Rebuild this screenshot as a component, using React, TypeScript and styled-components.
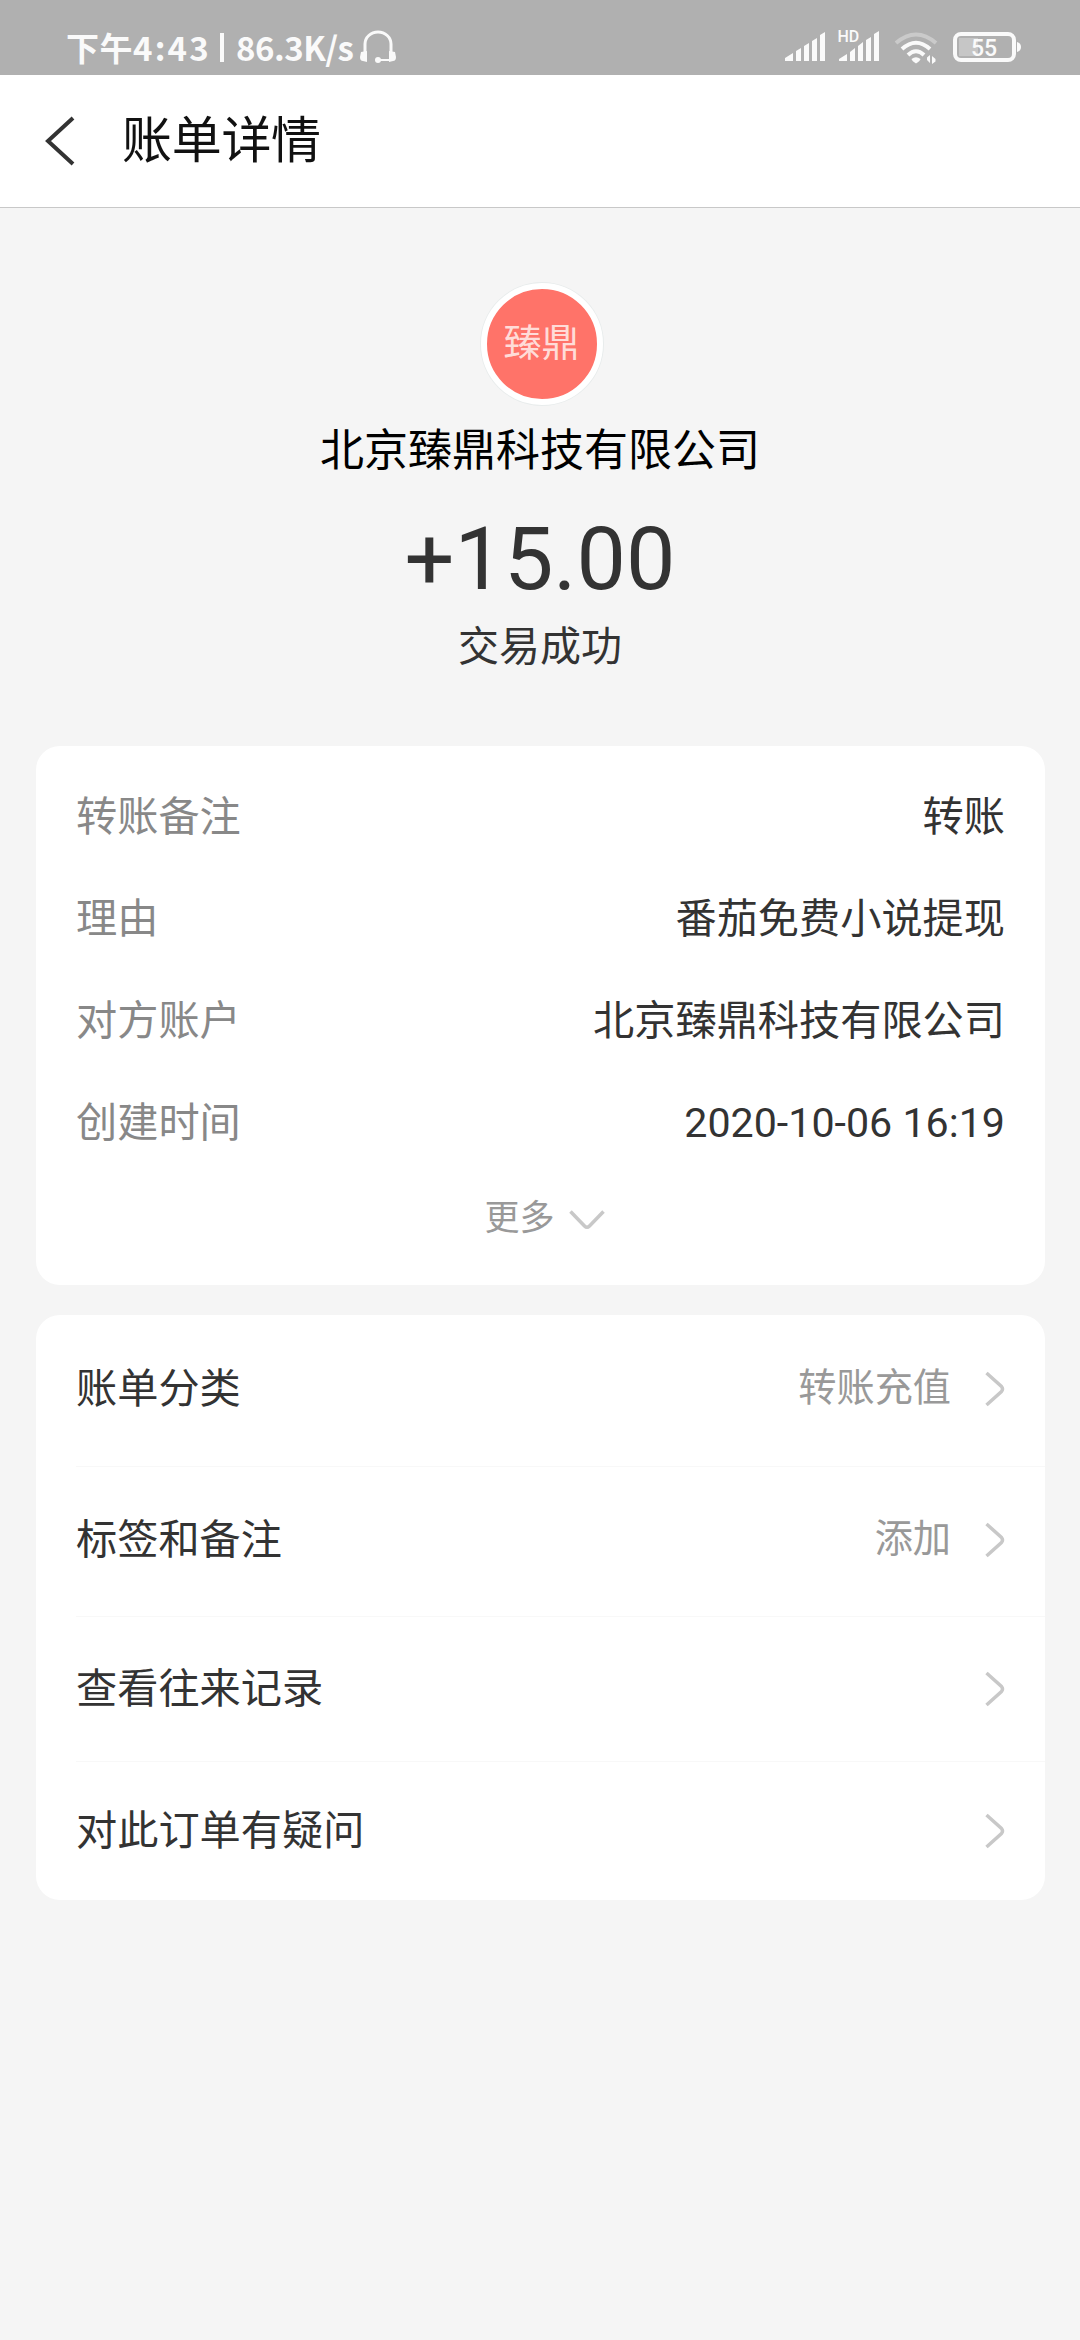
import React from "react";
import styled, { createGlobalStyle } from "styled-components";

const Global = createGlobalStyle`
  * { box-sizing: border-box; }
  body {
    margin: 0;
    background: #f5f5f5;
    font-family: Roboto, "Noto Sans CJK SC", sans-serif;
    color: #333;
  }
`;

const Screen = styled.div`
  width: 1080px;
  height: 2340px;
  background: #f5f5f5;
  display: flex;
  flex-direction: column;
  overflow: hidden;
`;

const StatusBar = styled.div`
  height: 75px;
  flex: none;
  background: #b0b0b0;
  padding: 20px 59px 0 66px;
  display: flex;
  justify-content: space-between;
`;

const StatusLeft = styled.div`
  display: flex;
  height: 54px;
  align-items: center;
  color: #fafafa;
  font-family: "Noto Sans CJK SC", sans-serif;
  font-size: 33px;
  line-height: 52px;
  padding-bottom: 1px;
  white-space: pre;
`;

const StatusText = styled.span<{ $width: number; $spacing?: number }>`
  width: ${(p) => p.$width}px;
  letter-spacing: ${(p) => p.$spacing ?? 0}px;
  font-weight: 700;
`;

const StatusDivider = styled.span`
  width: 4px;
  height: 29px;
  margin: 2px 12px 0 0;
  background: #fafafa;
`;

const StatusRight = styled.div`
  display: flex;
`;

const Header = styled.header`
  height: 133px;
  flex: none;
  background: #fff;
  border-bottom: 1px solid #c8c8c8;
  display: flex;
  align-items: center;
  padding-left: 44px;
`;

const Title = styled.h1`
  margin: 0 0 0 46px;
  font-size: 50px;
  font-weight: 400;
  line-height: 70px;
  letter-spacing: -0.3px;
  color: #111;
`;

const Summary = styled.section`
  height: 538px;
  flex: none;
  display: flex;
  flex-direction: column;
  align-items: center;
  padding-top: 75px;
`;

const Avatar = styled.div`
  width: 122px;
  height: 122px;
  margin-left: 3px;
  border-radius: 50%;
  border: 6px solid #fff;
  background: #ff7369;
  box-shadow: 0 0 0 1px #e8ecec;
  display: flex;
  align-items: center;
  justify-content: center;
  font-size: 38px;
  font-weight: 400;
  line-height: 50px;
  padding-bottom: 3px;
  color: #ffdcd8;
`;

const Payee = styled.div`
  margin-top: 14px;
  font-size: 44px;
  line-height: 64px;
  color: #000;
`;

const Amount = styled.div`
  margin-top: 24px;
  font-size: 88px;
  line-height: 104px;
  color: #333;
`;

const State = styled.div`
  margin-top: 6px;
  font-size: 41px;
  line-height: 60px;
`;

const Card = styled.section<{ $height: number }>`
  flex: none;
  height: ${(p) => p.$height}px;
  margin: 0 35px 30px 36px;
  border-radius: 24px;
  background: #fff;
  overflow: hidden;
`;

const DetailRow = styled.div`
  display: flex;
  justify-content: space-between;
  align-items: center;
  height: 102px;
  padding: 0 40px;
  font-size: 41.2px;
  line-height: 60px;
`;

const Details = styled.div`
  padding-top: 20px;
`;

const Label = styled.span`
  color: #888;
`;

const Value = styled.span`
  color: #333;
`;

const More = styled.button`
  width: 100%;
  height: 80px;
  border: 0;
  background: none;
  display: flex;
  align-items: center;
  justify-content: center;
  gap: 14px;
  padding: 0 0 0 8px;
  font: inherit;
  font-size: 35px;
  color: #999;

  svg {
    margin-top: 12px;
  }
`;

const LinkRow = styled.div<{ $height: number; $lift?: number }>`
  height: ${(p) => p.$height}px;
  margin-left: 40px;
  padding: 0 40px ${(p) => p.$lift ?? 0}px 0;
  display: flex;
  align-items: center;
  font-size: 41.2px;
  line-height: 60px;
  & + & {
    border-top: 1px solid #f8f8f8;
  }
`;

const LinkValue = styled.span`
  margin-left: auto;
  margin-right: 34px;
  padding-bottom: 1px;
  font-size: 38.2px;
  color: #999;
`;

const Push = styled.span`
  margin-left: auto;
`;

const Chevron = () => (
  <svg width="20" height="36" viewBox="0 0 20 36" fill="none" stroke="#c8c8c8" strokeWidth="3.5">
    <path d="M1.5 2 L16.5 15.5 Q18.5 18 16.5 20.5 L1.5 34" />
  </svg>
);

const Headset = () => (
  <svg width="36" height="34" viewBox="0 0 36 34" fill="none" stroke="#fafafa">
    <path d="M5 24 V14 A13 12 0 0 1 31 14 V24" strokeWidth="3" />
    <path d="M1 22 L7 21 V32 L3 31 Q0 31 0 27 Z M35 22 L29 21 V32 L33 31 Q36 31 36 27 Z" fill="#fafafa" stroke="none" />
    <path d="M18 30 H31" strokeWidth="2" />
    <circle cx="18" cy="30" r="3" fill="#fafafa" stroke="none" />
  </svg>
);

const Indicators = () => (
  <svg width="250" height="50" viewBox="770 20 250 50" fill="#fafafa">
    <path d="M784 61 V58 L792 53 V61Z M795 61 V51 L800 48 V61Z M803 61 V46 L808 43 V61Z M811 61 V41 L816 38 V61Z M819 61 V35 L824 32 V61Z" />
    <text x="836.5" y="42" fontSize="16" fontWeight="500" fontFamily="Roboto, sans-serif">HD</text>
    <path d="M838 61 V59 L846 54 V61Z M849 61 V52 L854 48 V61Z M857 61 V46 L862 42 V61Z M865 61 V40 L870 37 V61Z M873 61 V34 L878 31 V61Z" />
    <g fill="none" stroke="#fafafa" strokeWidth="4">
      <path d="M895 43 Q915 26 935 43" stroke="#cacaca" />
      <path d="M901 49 Q915 36.5 929 49" />
      <path d="M907 55 Q915 47.5 923 55" />
      <rect x="954" y="34" width="59" height="26" rx="6" />
    </g>
    <path d="M910.5 59 Q915 55.5 919.5 59 Q919 61 915 63.5 Q911 61 910.5 59Z" />
    <path d="M929 55 V63 L926 60 V57.500z M931 56 L934.500 59 V61.500 L931 64z" />
    <path d="M958 38 h19 v18 h-19z" fill="#c6c6c6" />
    <text x="970" y="55.5" fontSize="23" fontWeight="500" fontFamily="Roboto, sans-serif">55</text>
    <path d="M1016 42 q4 1 4 5 q0 4 -4 5z" />
  </svg>
);

const details = [
  ["转账备注", "转账"],
  ["理由", "番茄免费小说提现"],
  ["对方账户", "北京臻鼎科技有限公司"],
  ["创建时间", "2020-10-06 16:19"],
];

export default function App() {
  return (
    <Screen>
      <Global />
      <StatusBar>
        <StatusLeft>
          <StatusText $width={67} $spacing={0.5}>下午</StatusText>
          <StatusText $width={87} $spacing={2.2}>4:43</StatusText>
          <StatusDivider />
          <StatusText $width={124} $spacing={-0.5}>86.3K/s</StatusText>
          <Headset />
        </StatusLeft>
        <StatusRight>
          <Indicators />
        </StatusRight>
      </StatusBar>
      <Header>
        <svg width="32" height="50" viewBox="0 0 32 50" fill="none" stroke="#333" strokeWidth="4">
          <path d="M29 2 L4 25 L29 48" />
        </svg>
        <Title>账单详情</Title>
      </Header>
      <Summary>
        <Avatar>臻鼎</Avatar>
        <Payee>北京臻鼎科技有限公司</Payee>
        <Amount>+15.00</Amount>
        <State>交易成功</State>
      </Summary>
      <Card $height={539}>
        <Details>
          {details.map(([label, value]) => (
            <DetailRow key={label}>
              <Label>{label}</Label>
              <Value>{value}</Value>
            </DetailRow>
          ))}
        </Details>
        <More>
          更多
          <svg width="36" height="20" viewBox="0 0 36 20" fill="none" stroke="#c8c8c8" strokeWidth="3.5">
            <path d="M1.5 1.5 L15.5 16 Q18 18.5 20.5 16 L34.5 1.5" />
          </svg>
        </More>
      </Card>
      <Card $height={585}>
        <LinkRow $height={151} $lift={4}>
          账单分类<LinkValue>转账充值</LinkValue>
          <Chevron />
        </LinkRow>
        <LinkRow $height={150} $lift={4}>
          标签和备注<LinkValue>添加</LinkValue>
          <Chevron />
        </LinkRow>
        <LinkRow $height={145} $lift={1}>
          查看往来记录<Push />
          <Chevron />
        </LinkRow>
        <LinkRow $height={139}>
          对此订单有疑问<Push />
          <Chevron />
        </LinkRow>
      </Card>
    </Screen>
  );
}
